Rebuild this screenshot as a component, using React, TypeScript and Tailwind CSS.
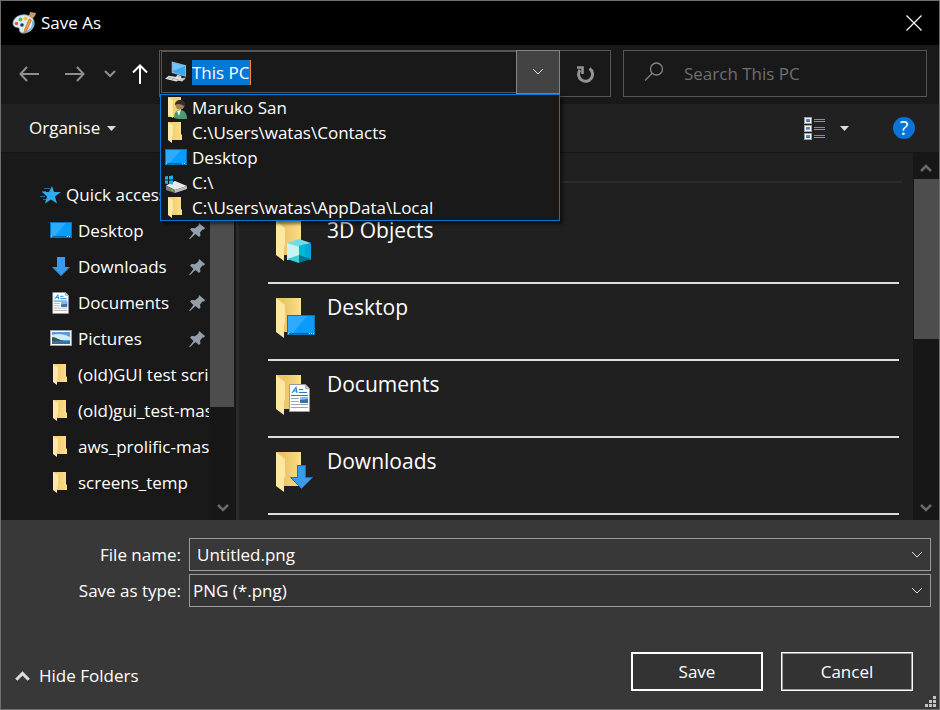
import { useId, type ReactNode } from "react";

/* ---------- drawings ---------- */

function PaintIcon() {
  return (
    <svg viewBox="0 0 24 24" className="size-6 shrink-0" aria-hidden="true">
      <path d="M1 13C1 7 7 3 14 4c6 1 9 5 8 10-1 5-6 8-11 8-4 0-3-3-4-5-1-1-5 0-6-4z" fill="#dcebf5" stroke="#8fb9d6" strokeWidth="0.8" />
      <path d="M13 21c6-1 9-6 8-11" fill="none" stroke="#7db4dc" strokeWidth="2" />
      <circle cx="10" cy="14" r="1.800" fill="#1c3c58" />
      <circle cx="4.500" cy="12.500" r="1.800" fill="#e2574c" />
      <circle cx="8.500" cy="8.500" r="2" fill="#6cb54c" />
      <circle cx="13.500" cy="7.500" r="2" fill="#f1c531" />
      <path d="M17 8l2.500 1-5 11-3 3 1-4z" fill="#ef9a3a" stroke="#b8651c" strokeWidth="0.6" />
      <path d="M17 5l1-4 6 1-1 3-3 3-2-1z" fill="#c99a69" />
      <path d="M17 6l3 2" stroke="#e9d6b8" strokeWidth="1.500" />
    </svg>
  );
}

function PcIcon() {
  return (
    <svg viewBox="0 0 23 22" className="h-[22px] w-[22px] shrink-0" aria-hidden="true">
      <path d="M7 0l15 4v12L7 12z" fill="#9fb4c2" />
      <path d="M8 1l13 4v10L8 11z" fill="#35a8f5" />
      <path d="M8 1l13 4L8 10z" fill="#6fc5fb" />
      <path d="M13 14l4 1v2l4 1-3 3-9-2z" fill="#c6cdd2" />
      <path d="M4 15l13 2-5 4-12-3z" fill="#dfe4e7" />
      <path d="M4 17l10 2M6 16l-3 2M10 17l-3 2.500" stroke="#8d979d" strokeWidth="0.7" />
      <path d="M19 17l3 0-3 3" fill="#b8c0c5" />
    </svg>
  );
}

function FolderIcon() {
  const id = useId();
  return (
    <svg viewBox="0 0 22 22" className="size-[22px] shrink-0" aria-hidden="true">
      <defs>
        <linearGradient id={id}>
          <stop offset="0" stopColor="#eec765" />
          <stop offset="1" stopColor="#fbdf8d" />
        </linearGradient>
      </defs>
      <path d="M3 0h13v12l1 1v5H3z" fill={`url(#${id})`} />
      <path d="M3 0l5 3v11l-1 1v6l-4-3z" fill="#ffe9a9" />
    </svg>
  );
}

function UserFolderIcon() {
  return (
    <svg viewBox="0 0 22 22" className="size-[22px] shrink-0" aria-hidden="true">
      <path d="M3 0h13v20H3z" fill="#f3cf71" />
      <path d="M3 0l5 3v18l-5-3z" fill="#ffe9a9" />
      <circle cx="15" cy="8" r="4.500" fill="#a97d5a" />
      <path d="M10 8c0-7 10-6 10-1l-1 2c-3-2-6-3-9-1z" fill="#34302e" />
      <path d="M9 21c0-5 2-8 6-8s7 3 7 9c-5 1-10 0-13-1z" fill="#4f9a72" />
      <path d="M12 14l2 5 2-6z" fill="#e8efe9" />
    </svg>
  );
}

function DesktopIcon() {
  return (
    <svg viewBox="0 0 22 22" className="size-[22px] shrink-0" aria-hidden="true">
      <rect x="0.500" y="2.500" width="21" height="15" fill="#0a9bfb" stroke="#0b73b8" />
      <path d="M1 3h15L5 16H1z" fill="#2cabff" />
      <path d="M1 16.500h20" stroke="#0567a8" />
      <path d="M1 16.500h1M17 16.500h1M19 16.500h1" stroke="#fff" />
    </svg>
  );
}

function DriveIcon() {
  return (
    <svg viewBox="0 0 22 22" className="size-[22px] shrink-0" aria-hidden="true">
      <path d="M1 13.500l9-4.500 12 5-12 4z" fill="#e9e9e9" />
      <path d="M1 13.500l9 4.500v3l-9-3z" fill="#7d7d7d" />
      <path d="M10 18l12-4v3l-12 4z" fill="#bdbdbd" />
      <path d="M0 4.500L3 4v3.500H0zM4 3.900l4-.5v4.100H4zM0 8.500h3V12l-3-.5zM4 8.500h4v4L4 12z" fill="#19b5ee" />
      <path d="M6 18l2 .7" stroke="#3edb3a" strokeWidth="1.300" />
    </svg>
  );
}

function StarIcon() {
  return (
    <svg viewBox="0 0 21 20" className="h-5 w-[21px] shrink-0" aria-hidden="true">
      <path d="M12 1l2 6h7l-6 4.500 2 7-6-4-6 4 2-7-5-4.500h7z" fill="#30a9f2" />
      <path d="M4 3.500h6M2 6.500h4M0 11.500h5M3 14.500h3" stroke="#1c78b8" strokeWidth="0.900" />
    </svg>
  );
}

function DownloadIcon() {
  return (
    <svg viewBox="0 0 22 22" className="size-[22px] shrink-0" aria-hidden="true">
      <path d="M7 1h8v10h5l-9 9-9-9h5z" fill="#3a9bec" />
      <path d="M2.500 11L11 19.500 19.500 11" fill="none" stroke="#1d6fb8" strokeWidth="0.700" />
    </svg>
  );
}

function DocumentShape() {
  return (
    <g>
      <path d="M.5.500h16l4 4v23H.5z" fill="#fff" stroke="#9a9a9a" />
      <path d="M16.500.500v4h4z" fill="#d0d0d0" stroke="#9a9a9a" strokeWidth="0.700" />
      <path d="M3 9l4-5.500L8 9M4.500 7h3M10 5.500h4M10 8.500h8M2 11.500h17" fill="none" stroke="#1582cf" strokeWidth="1.200" />
      <path d="M2 14.500h8M2 17.500h8M2 20.500h17M2 23.500h17" stroke="#a5a5a5" />
      <rect x="11" y="13" width="8" height="6" fill="#3b6ea8" />
      <path d="M11 13h8v2l-8 1z" fill="#8cb9ee" />
    </g>
  );
}

function DocumentIcon() {
  return (
    <svg viewBox="-3 0 28 28" className="size-[22px] shrink-0" aria-hidden="true">
      <DocumentShape />
    </svg>
  );
}

function PictureIcon() {
  return (
    <svg viewBox="0 0 22 22" className="size-[22px] shrink-0" aria-hidden="true">
      <rect x="0.500" y="2.500" width="21" height="15" fill="#fff" stroke="#9d9d9d" />
      <rect x="2" y="4" width="18" height="12" fill="#5c9ae0" />
      <path d="M2 7c6-2 12-1 18 2v3H2z" fill="#d3ebf7" />
      <path d="M2 9c4 0 7 3 12 4H2z" fill="#315c45" />
      <path d="M2 13h18v3H2z" fill="#3a6f9e" />
    </svg>
  );
}

function PinIcon() {
  return (
    <svg viewBox="0 0 16 16" className="size-4 shrink-0" aria-hidden="true">
      <path d="M10 0l6 5-1 1.500h-1.500L11 9.500l.5 3-1.500 1.500-3.500-3L1 16H0l4.500-6L1 6.500 2.500 5l3.500.3L9.500 2.500z" fill="#93a0ab" />
    </svg>
  );
}

function LargeFolder({ children }: { children: ReactNode }) {
  const id = useId();
  return (
    <svg viewBox="0 0 39 42" className="h-[42px] w-[39px] shrink-0" aria-hidden="true">
      <defs>
        <linearGradient id={id}>
          <stop offset="0.300" stopColor="#eac466" />
          <stop offset="1" stopColor="#fcdf88" />
        </linearGradient>
      </defs>
      <path d="M0 0h25v34H0z" fill={`url(#${id})`} />
      <path d="M0 0l9 7v18l-1 1v14l-8-6z" fill="#ffe7a2" />
      {children}
    </svg>
  );
}

function CubeOverlay() {
  return (
    <g>
      <path d="M11 22l12-4 12 4-12 4z" fill="#6fdcea" />
      <path d="M11 22l12 4v11l-12 2z" fill="#c9f3f3" />
      <path d="M35 22l-12 4v11l12 2z" fill="#00a6dc" />
      <path d="M23 25l6-2v14l-6 1z" fill="#00b7d8" />
      <path d="M11 38l12-4v8z" fill="#37d3d8" />
      <path d="M35 38l-12-4v8z" fill="#04738c" />
    </g>
  );
}

function DesktopOverlay() {
  return (
    <g>
      <rect x="11.500" y="17.500" width="27" height="19" fill="#0a9bfb" stroke="#0b73b8" />
      <path d="M12 18h19L17 35h-5z" fill="#2cabff" />
      <path d="M12 35.500h26" stroke="#0567a8" />
      <path d="M12 35.500h1M33 35.500h1M35 35.500h1M37 35.500h1" stroke="#fff" />
    </g>
  );
}

function DocumentOverlay() {
  return (
    <g transform="translate(13 9)">
      <DocumentShape />
    </g>
  );
}

function DownloadOverlay() {
  return <path d="M21.500 13.500h8v12h7L25.500 36.500l-11-11h7z" fill="#3a9bec" stroke="#1d6fb8" />;
}

function Chevron({ className, up = false }: { className: string; up?: boolean }) {
  return (
    <svg viewBox="0 0 12 8" className={className} fill="none" stroke="currentColor" aria-hidden="true">
      <path d={up ? "M1 7l5-5 5 5" : "M1 1l5 5 5-5"} />
    </svg>
  );
}

function Caret() {
  return (
    <svg viewBox="0 0 9 5" className="h-[5px] w-[9px]" aria-hidden="true">
      <path d="M0 0h9L4.500 5z" fill="#dcdcdc" />
    </svg>
  );
}

function ArrowLeft({ className }: { className: string }) {
  return (
    <svg viewBox="0 0 20 16" className={className} fill="none" stroke="currentColor" strokeWidth="2" aria-hidden="true">
      <path d="M20 8H2M8 1L1.500 8 8 15" />
    </svg>
  );
}

function ViewIcon() {
  const rows = [0, 8, 16];
  return (
    <svg viewBox="0 0 21 23" className="h-[23px] w-[21px]" aria-hidden="true">
      {rows.map((y) => (
        <g key={y}>
          <rect x="0.500" y={y + 0.5} width="7" height="6" fill="#fff" stroke="#9c9c9c" />
          <rect x="2" y={y + 2} width="4" height="3" fill="#4f86c6" />
          <path d={`M3 ${y + 4.5}h3`} stroke={y === 8 ? "#d6a21d" : "#3d6a5e"} />
          <path d={`M10 ${y + 2.5}h11`} stroke="#8b8b8b" />
          <path d={`M10 ${y + 4.5}h11`} stroke="#5f9df5" />
        </g>
      ))}
    </svg>
  );
}

/* ---------- data ---------- */

const history = [
  { label: "Maruko San", icon: <UserFolderIcon /> },
  { label: "C:\\Users\\watas\\Contacts", icon: <FolderIcon /> },
  { label: "Desktop", icon: <DesktopIcon /> },
  { label: "C:\\", icon: <DriveIcon /> },
  { label: "C:\\Users\\watas\\AppData\\Local", icon: <FolderIcon /> },
];

const places = [
  { label: "Desktop", icon: <DesktopIcon />, pinned: true },
  { label: "Downloads", icon: <DownloadIcon />, pinned: true },
  { label: "Documents", icon: <DocumentIcon />, pinned: true },
  { label: "Pictures", icon: <PictureIcon />, pinned: true },
  { label: "(old)GUI test scripts", icon: <FolderIcon />, pinned: false },
  { label: "(old)gui_test-master", icon: <FolderIcon />, pinned: false },
  { label: "aws_prolific-master", icon: <FolderIcon />, pinned: false },
  { label: "screens_temp", icon: <FolderIcon />, pinned: false },
];

const folders = [
  { label: "3D Objects", overlay: <CubeOverlay /> },
  { label: "Desktop", overlay: <DesktopOverlay /> },
  { label: "Documents", overlay: <DocumentOverlay /> },
  { label: "Downloads", overlay: <DownloadOverlay /> },
];

/* ---------- sections ---------- */

function TitleBar() {
  return (
    <header className="flex h-11 shrink-0 items-center gap-[5px] bg-black pl-[11px] text-white">
      <PaintIcon />
      <h1 className="flex-1">Save As</h1>
      <button aria-label="Close" className="flex h-full w-[50px] items-center justify-center">
        <svg viewBox="0 0 16 16" className="size-4" fill="none" stroke="currentColor" strokeWidth="1.200" aria-hidden="true">
          <path d="M.5.500l15 15M15.500.500l-15 15" />
        </svg>
      </button>
    </header>
  );
}

function AddressBar() {
  return (
    <div className="relative flex h-[47px] flex-1 border border-[#555555]">
      <div className="ml-px flex h-[42px] flex-1 items-center gap-[5px] border border-r-0 border-[#555555] pl-[3px]">
        <PcIcon />
        <input
          aria-label="Address"
          defaultValue="This PC"
          ref={(el) => {
            el?.focus();
            el?.select();
          }}
          className="field-sizing-content h-[25px] border-r border-[#ff8728] bg-[#0078d7] text-white outline-none selection:bg-[#0078d7] selection:text-white"
        />
      </div>
      <button aria-label="Previous locations" className="-mt-px flex size-11 items-center justify-center border border-[#848484] bg-[#434343] text-[#e0e0e0]">
        <Chevron className="h-2 w-3" />
      </button>
      <button aria-label="Refresh" className="flex w-[50px] items-center justify-center text-[#949494]">
        <svg viewBox="0 0 18 18" className="size-[18px]" fill="none" stroke="currentColor" strokeWidth="3" aria-hidden="true">
          <path d="M13.500 3.500A7 7 0 1 1 4 5" />
          <path d="M1 2.500h5.500V9" strokeWidth="2.600" />
        </svg>
      </button>
      <ul className="absolute top-[43px] right-[50px] left-0 z-10 border border-[#0078d7] bg-[#191919] shadow-[3px_3px_3px_rgba(0,0,0,0.5)]">
        {history.map((item) => (
          <li key={item.label}>
            <button className="flex h-[25px] w-full items-center gap-[5px] pl-1 text-white">
              {item.icon}
              {item.label}
            </button>
          </li>
        ))}
      </ul>
    </div>
  );
}

function NavigationBar() {
  return (
    <div className="flex h-[59px] shrink-0 items-start bg-[#191919] pt-[5px] pr-3 pl-[5px]">
      <nav className="flex h-[47px] text-[#8f8f8f]">
        <button aria-label="Back" className="flex w-[46px] items-center justify-center">
          <ArrowLeft className="h-4 w-5" />
        </button>
        <button aria-label="Forward" className="flex w-[46px] items-center justify-center">
          <ArrowLeft className="h-4 w-5 rotate-180" />
        </button>
        <button aria-label="Recent locations" className="flex w-6 items-center justify-center">
          <Chevron className="h-2 w-[14px] stroke-2" />
        </button>
        <button aria-label="Up" className="flex w-[37px] items-center pl-[10px] text-white">
          <svg viewBox="0 0 16 20" className="h-5 w-4" fill="none" stroke="currentColor" strokeWidth="2" aria-hidden="true">
            <path d="M8 20V2M1 8.500l7-7 7 7" />
          </svg>
        </button>
      </nav>
      <AddressBar />
      <label className="ml-3 flex h-[47px] w-[304px] items-center gap-5 border border-[#555555] pl-5">
        <svg viewBox="0 0 20 20" className="mb-1 size-5 shrink-0" fill="none" stroke="#858585" strokeWidth="1.300" aria-hidden="true">
          <circle cx="12.500" cy="7" r="6" />
          <path d="M8 11.500L1 18.500" />
        </svg>
        <input aria-label="Search" placeholder="Search This PC" className="w-full bg-transparent text-white outline-none placeholder:text-[#6f6f6f]" />
      </label>
    </div>
  );
}

function Toolbar() {
  return (
    <div className="flex h-[49px] shrink-0 items-center border-b border-[#161616] bg-[#212121] pr-6 pl-7 text-white">
      <button className="flex items-center gap-[7px]">
        Organise
        <Caret />
      </button>
      <button aria-label="Change view" className="ml-auto">
        <ViewIcon />
      </button>
      <button aria-label="More view options" className="ml-[15px] flex h-6 w-[9px] items-center">
        <Caret />
      </button>
      <button aria-label="Help" className="ml-11 size-[22px] rounded-full bg-[#0a74d6] text-xl leading-[22px]">
        ?
      </button>
    </div>
  );
}

function Sidebar() {
  return (
    <div className="flex w-[235px] shrink-0 bg-[#191919]">
      <nav className="mr-px min-w-0 flex-1 overflow-hidden pt-6 text-white">
        <button className="flex h-9 w-full items-center gap-[5px] pl-[39px] whitespace-nowrap">
          <StarIcon />
          Quick access
        </button>
        <ul>
          {places.map((place) => (
            <li key={place.label}>
              <button className="flex h-9 w-full items-center pl-[49px]">
                {place.icon}
                <span className="ml-[6px] min-w-0 flex-1 overflow-hidden text-left whitespace-nowrap">{place.label}</span>
                {place.pinned && (
                  <span className="mr-1">
                    <PinIcon />
                  </span>
                )}
              </button>
            </li>
          ))}
        </ul>
      </nav>
      <div className="flex w-[26px] flex-col bg-[#171717] text-[#6a6a6a]">
        <button aria-label="Scroll folders up" className="flex h-[26px] w-full items-center justify-center">
          <Chevron up className="h-2 w-3 stroke-[2.500]" />
        </button>
        <div className="h-[228px] w-6 bg-[#4d4d4d]" />
        <button aria-label="Scroll folders down" className="mt-auto flex h-[25px] w-full items-center justify-center">
          <Chevron className="h-2 w-3 stroke-[2.500]" />
        </button>
      </div>
    </div>
  );
}

function FileList() {
  return (
    <main className="flex min-w-0 flex-1 border-l-3 border-[#292929] bg-[#202020]">
      <div className="min-w-0 flex-1 overflow-hidden pt-7 pr-[11px] pl-[29px]">
        <hr className="border-t-2 border-[#2b2b2b]" />
        <ul className="mt-6 mr-[3px]">
          {folders.map((folder) => (
            <li key={folder.label} className="border-b-2 border-[#dedede]">
              <button className="flex h-[75px] w-full items-start gap-3 pt-[14px] pl-2 text-[21px] leading-[18px] text-white">
                <LargeFolder>{folder.overlay}</LargeFolder>
                {folder.label}
              </button>
            </li>
          ))}
        </ul>
      </div>
      <div className="flex w-[26px] shrink-0 flex-col items-end bg-[#171717] text-[#6a6a6a]">
        <button aria-label="Scroll files up" className="flex h-[26px] w-full items-center justify-center pt-1">
          <Chevron up className="h-2 w-3 stroke-[2.500]" />
        </button>
        <div className="h-40 w-[25px] bg-[#4d4d4d]" />
        <button aria-label="Scroll files down" className="mt-auto flex h-[25px] w-full items-center justify-center">
          <Chevron className="h-2 w-3 stroke-[2.500]" />
        </button>
      </div>
    </main>
  );
}

function Footer() {
  return (
    <footer className="shrink-0 bg-[#383838] pt-[18px] text-white">
      <div className="grid grid-cols-[180px_1fr] items-center gap-x-2 gap-y-[3px] pr-2">
        <label htmlFor="file-name" className="text-right">
          File name:
        </label>
        <div className="flex h-[33px] border border-[#9b9b9b]">
          <input id="file-name" defaultValue="Untitled.png" className="min-w-0 flex-1 bg-transparent pl-[7px] outline-none" />
          <button aria-label="Previous file names" className="flex w-[26px] items-center justify-center text-[#dcdcdc]">
            <Chevron className="h-2 w-3" />
          </button>
        </div>
        <label htmlFor="file-type" className="text-right">
          Save as type:
        </label>
        <div className="grid h-[33px] grid-cols-[1fr_26px] items-center border border-[#9b9b9b] bg-[#333333]">
          <select id="file-type" className="col-span-2 col-start-1 row-start-1 h-full w-full appearance-none bg-transparent pl-[3px] outline-none">
            <option>PNG (*.png)</option>
          </select>
          <Chevron className="pointer-events-none col-start-2 row-start-1 h-2 w-3 justify-self-center text-[#dcdcdc]" />
        </div>
      </div>
      <div className="mt-[45px] flex h-[39px] items-center gap-[18px] pr-[26px] pl-[14px]">
        <button className="mt-2 mr-auto flex items-center gap-[9px]">
          <Chevron up className="h-[10px] w-[15px] stroke-[2.500] text-[#dcdcdc]" />
          Hide Folders
        </button>
        <button className="h-full w-[132px] border-2 border-white bg-[#333333]">Save</button>
        <button className="h-full w-[132px] border border-white bg-[#333333] inset-ring inset-ring-[#9b9b9b]">Cancel</button>
      </div>
      <div className="flex h-[18px] items-end justify-end pr-[3px] pb-[2px]">
        <svg viewBox="0 0 11 11" className="size-[11px]" fill="#c4c4c4" aria-hidden="true">
          <path d="M8 0h3v3H8zM4 4h3v3H4zM8 4h3v3H8zM0 8h3v3H0zM4 8h3v3H4zM8 8h3v3H8z" />
        </svg>
      </div>
    </footer>
  );
}

export default function App() {
  return (
    <div className="flex h-screen flex-col border border-[#6e6e6e] bg-[#191919] font-['Open_Sans','Noto_Sans',sans-serif] text-[17px] leading-6">
      <TitleBar />
      <NavigationBar />
      <Toolbar />
      <div className="flex min-h-0 flex-1">
        <Sidebar />
        <FileList />
      </div>
      <Footer />
    </div>
  );
}
